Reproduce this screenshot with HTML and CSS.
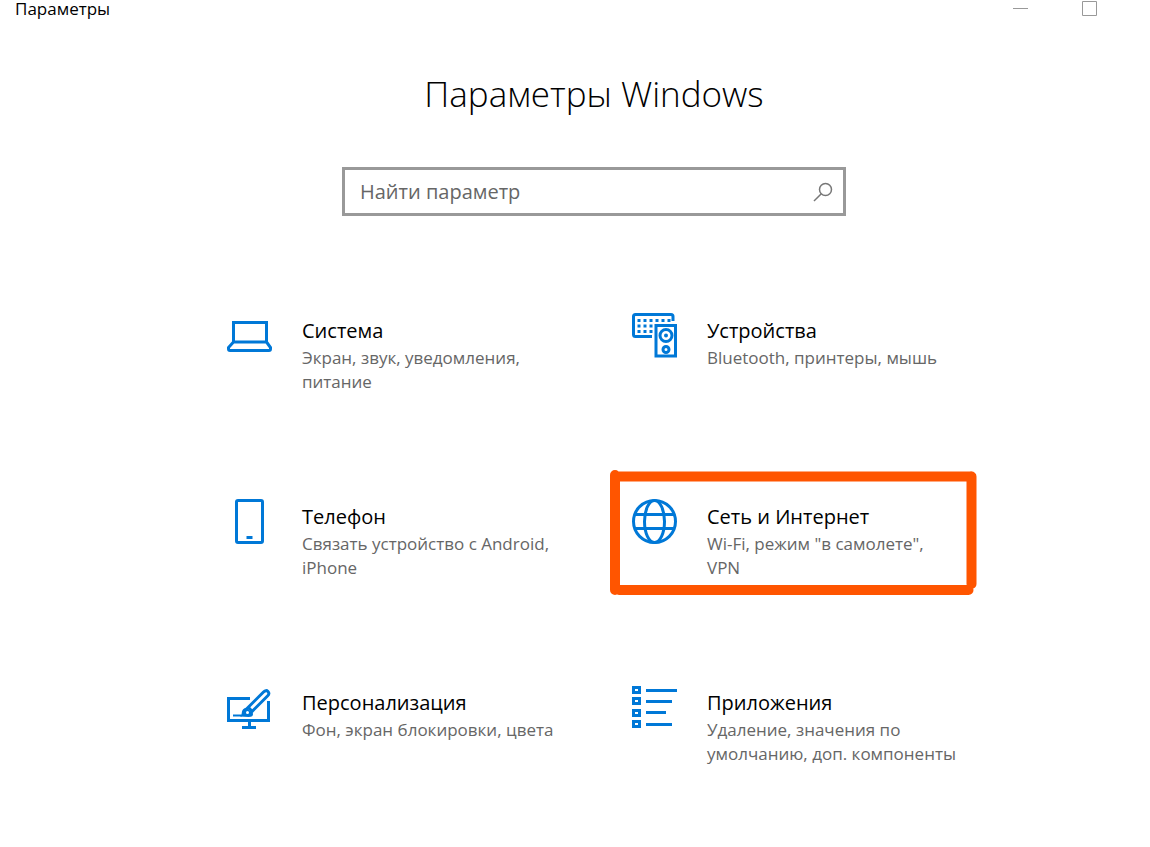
FILE: index.html
```html
<!DOCTYPE html>
<html lang="ru">
<head>
<meta charset="utf-8">
<meta name="viewport" content="width=device-width, initial-scale=1">
<title>Параметры</title>
<link rel="stylesheet" href="styles.css">
</head>
<body>
<header class="titlebar">
  <span class="titlebar-name">Параметры</span>
  <div class="window-controls">
    <button class="window-button" type="button" aria-label="Свернуть">
      <svg width="17" height="17" viewBox="0 0 17 17"><path d="M1 8.500H16"/></svg>
    </button>
    <button class="window-button" type="button" aria-label="Развернуть">
      <svg width="17" height="17" viewBox="0 0 17 17"><path d="M1.500 1.500H15.500V15.500H1.500Z"/></svg>
    </button>
  </div>
</header>
<main class="settings">
  <h1 class="settings-title">Параметры Windows</h1>
  <form class="search" role="search">
    <input class="search-input" type="text" placeholder="Найти параметр" aria-label="Найти параметр">
    <button class="search-button" type="button" aria-label="Поиск">
      <svg width="20" height="20" viewBox="0 0 20 20"><circle cx="12.500" cy="7.500" r="6"/><path d="M8.300 11.700L1 19"/></svg>
    </button>
  </form>
  <nav class="categories" aria-label="Категории">
    <a class="category" href="#system">
      <svg class="icon" viewBox="0 0 46 46"><path d="M6.500 22V1M5 10.500H41M6.500 9V31M39.500 9V31" style="display:none"/><path d="M6.500 30V10.500H39.500V30Z M6.500 30L1.500 35.500V37Q1.500 38.500 3 38.500H42Q43.500 38.500 43.500 37V35.500L39.500 30"/></svg>
      <span class="category-text"><span class="category-name">Система</span><span class="category-info">Экран, звук, уведомления, питание</span></span>
    </a>
    <a class="category" href="#devices">
      <svg class="icon" viewBox="0 0 46 46"><path d="M20 24.500H3.500Q1.500 24.500 1.500 22.500V4.500Q1.500 2.500 3.500 2.500H39Q41 2.500 41 4.500V9"/><path class="keys" d="M5.500 8.500H39M5.500 14H22M5.500 19.500H21"/><path d="M24 13.500H43.500V44H24Z"/><circle cx="34" cy="23.500" r="6"/><circle cx="34" cy="37.500" r="3"/><circle class="fill" cx="34" cy="23.500" r="2"/></svg>
      <span class="category-text"><span class="category-name">Устройства</span><span class="category-info">Bluetooth, принтеры, мышь</span></span>
    </a>
    <a class="category" href="#phone">
      <svg class="icon" viewBox="0 0 46 46"><rect x="9.500" y="2.500" width="26" height="42" rx="1.500"/><path d="M19.500 39.500H25.500"/></svg>
      <span class="category-text"><span class="category-name">Телефон</span><span class="category-info">Связать устройство с Android, iPhone</span></span>
    </a>
    <a class="category" href="#network">
      <svg class="icon" viewBox="0 0 46 46"><circle cx="22.500" cy="23.500" r="21"/><ellipse cx="22.500" cy="23.500" rx="10" ry="21"/><path d="M3 16.500H42M3 30.500H42"/></svg>
      <span class="category-text"><span class="category-name">Сеть и Интернет</span><span class="category-info">Wi-Fi, режим "в самолете", VPN</span></span>
      <svg class="marker" width="368" height="128" viewBox="0 0 368 128" aria-hidden="true"><path d="M5 6V121M5 7.500H361M361.500 7.500V115M9 121H358.500"/></svg>
    </a>
    <a class="category" href="#personalization">
      <svg class="icon" viewBox="0 0 46 46"><path d="M23 14.500H1.500V36.500H41.500V17"/><path d="M22.500 37V43M15 43.500H29"/><path class="thin" d="M6 31.500H15"/><path class="fill" d="M13 32.500Q15 31 15 27.500Q16 23.500 20 24L26 29.500Q26.500 33 21.500 33Z"/><path class="brush" d="M20.500 24L36.500 8Q39 5.500 41 7.500Q43 9.500 40.500 12L25 27.500Q22.500 23.500 20.500 24Z"/><circle class="dot" cx="20.500" cy="28.500" r="1.500"/></svg>
      <span class="category-text"><span class="category-name">Персонализация</span><span class="category-info">Фон, экран блокировки, цвета</span></span>
    </a>
    <a class="category" href="#apps">
      <svg class="icon" viewBox="0 0 46 46"><path d="M1.500 3.500H7.500V8.500H1.500ZM1.500 14.500H7.500V19.500H1.500ZM1.500 26.500H7.500V31.500H1.500ZM1.500 37.500H7.500V42.500H1.500ZM14 6.500H45M14 17.500H40M14 28.500H34M14 40.500H40"/></svg>
      <span class="category-text"><span class="category-name">Приложения</span><span class="category-info">Удаление, значения по умолчанию, доп. компоненты</span></span>
    </a>
  </nav>
</main>
</body>
</html>
```
FILE: styles.css
```css
* { box-sizing: border-box; }
body {
  margin: 0;
  background: #fff;
  color: #000;
  font-family: "Open Sans", "Noto Sans", sans-serif;
}
button {
  border: 0;
  padding: 0;
  background: none;
}
svg {
  display: block;
  fill: none;
}
.titlebar {
  display: flex;
  justify-content: space-between;
  padding: 0 52px 0 15px;
  height: 18px;
}
.titlebar-name {
  font-size: 17px;
  line-height: 18px;
}
.window-controls {
  display: flex;
  gap: 52px;
}
.window-button {
  height: 17px;
  stroke: #999;
}
.settings {
  display: flex;
  flex-direction: column;
  align-items: center;
  padding: 50px 0 40px 38px;
}
.settings-title {
  margin: 0;
  font-size: 35px;
  font-weight: 300;
  line-height: 52px;
}
.search {
  display: flex;
  align-items: center;
  width: 504px;
  max-width: 100%;
  height: 49px;
  margin-top: 47px;
  padding-right: 10px;
  border: 3px solid #999;
}
.search-input {
  flex: 1;
  min-width: 0;
  border: 0;
  outline: 0;
  padding: 0 15px;
  background: none;
  color: #000;
  font: inherit;
  font-size: 20px;
  line-height: 28px;
}
.search-input::placeholder {
  color: #666;
  opacity: 1;
}
.search-button {
  stroke: #777;
  stroke-width: 1.5px;
}
.categories {
  display: grid;
  grid-template-columns: repeat(2, 329px);
  grid-auto-rows: 84px;
  gap: 102px 76px;
  margin-top: 96px;
}
.category {
  position: relative;
  display: flex;
  gap: 29px;
  color: inherit;
  text-decoration: none;
}
.icon {
  flex: none;
  width: 46px;
  height: 46px;
  stroke: #0078d7;
  stroke-width: 3px;
}
.icon .keys {
  stroke-dasharray: 3 3;
}
.icon .thin {
  stroke-width: 2px;
}
.icon .fill {
  fill: #0078d7;
  stroke: none;
}
.icon .brush {
  stroke-width: 3px;
}
.icon .dot {
  fill: #fff;
  stroke: none;
}
.category-text {
  display: flex;
  flex-direction: column;
  flex: 1;
}
.category-name {
  padding-top: 4px;
  font-size: 20px;
  line-height: 30px;
}
.category-info {
  color: #666;
  font-size: 17px;
  line-height: 24px;
}
.marker {
  position: absolute;
  top: -29px;
  left: -22px;
  pointer-events: none;
  stroke: #ff5500;
  stroke-width: 10px;
  stroke-linecap: round;
}
```
